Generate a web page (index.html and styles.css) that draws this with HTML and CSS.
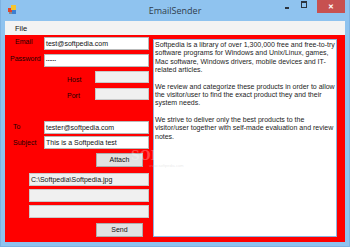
FILE: index.html
```html
<!DOCTYPE html>
<html>
<head>
<meta charset="utf-8">
<link rel="stylesheet" href="styles.css">
</head>
<body>
<div class="window">
  <div class="titlebar">
    <svg class="appicon" width="9" height="9" viewBox="0 0 9 9">
      <rect x="0" y="3" width="4" height="4" fill="#e0452a"/>
      <rect x="3" y="0" width="5" height="5" fill="#f4c430"/>
      <rect x="4" y="5" width="4" height="4" fill="#3c7fd1"/>
      <rect x="1" y="7" width="3" height="2" fill="#8a8a8a"/>
    </svg>
    <div class="title">EmailSender</div>
    <div class="controls">
      <div class="btn-min"><span></span></div>
      <div class="btn-max"><span></span></div>
      <div class="btn-close">&#x2715;</div>
    </div>
  </div>
  <div class="menubar"><span class="menu-item">File</span></div>
  <div class="client">
    <div class="form">
      <div class="row r-email"><span class="lbl lbl-email">Email</span><div class="tb tb-wide">test@softpedia.com</div></div>
      <div class="row r-pass"><span class="lbl lbl-pass">Password</span><div class="tb tb-wide pw">••••••</div></div>
      <div class="row r-host"><span class="lbl lbl-host">Host</span><div class="tb tb-short dis"></div></div>
      <div class="row r-port"><span class="lbl lbl-port">Port</span><div class="tb tb-short dis"></div></div>
      <div class="row r-to"><span class="lbl lbl-to">To</span><div class="tb tb-wide">tester@softpedia.com</div></div>
      <div class="row r-subj"><span class="lbl lbl-subj">Subject</span><div class="tb tb-wide">This is a Softpedia test</div></div>
      <div class="row r-attach"><div class="button">Attach</div></div>
      <div class="row r-file1"><div class="tb tb-file dis">C:\Softpedia\Softpedia.jpg</div></div>
      <div class="row r-file2"><div class="tb tb-file dis"></div></div>
      <div class="row r-file3"><div class="tb tb-file dis"></div></div>
      <div class="row r-send"><div class="button">Send</div></div>
    </div>
    <div class="rtb">
      <p>Softpedia is a library of over 1,300,000 free and free-to-try software programs for Windows and Unix/Linux, games, Mac software, Windows drivers, mobile devices and IT-related articles.</p>
      <p>We review and categorize these products in order to allow the visitor/user to find the exact product they and their system needs.</p>
      <p>We strive to deliver only the best products to the visitor/user together with self-made evaluation and review notes.</p>
    </div>
    <div class="watermark">SOFTPEDIA<span class="wm-small">www.softpedia.com</span></div>
  </div>
</div>
</body>
</html>
```
FILE: styles.css
```css
html, body {
  margin: 0;
  padding: 0;
}
body {
  width: 350px;
  height: 247px;
  overflow: hidden;
  font-family: "Liberation Sans", Arial, sans-serif;
}
.window {
  width: 350px;
  height: 247px;
  box-sizing: border-box;
  background: #8fc3ef;
  border: 1px solid #7db2e2;
  border-top: none;
  padding: 0 4px 4px 4px;
  display: flex;
  flex-direction: column;
}
.titlebar {
  height: 21px;
  display: flex;
  align-items: flex-start;
  position: relative;
  margin: 0 -4px;
}
.appicon {
  margin: 5px 0 0 7px;
}
.title {
  position: absolute;
  left: 0;
  right: 0;
  top: 4px;
  text-align: center;
  font-family: "Open Sans", "Liberation Sans", sans-serif;
  font-size: 9px;
  color: #2f3d4c;
  pointer-events: none;
}
.controls {
  margin-left: auto;
  display: flex;
  align-items: flex-start;
  margin-right: 4px;
}
.btn-min, .btn-max {
  width: 16px;
  height: 13px;
  display: flex;
  align-items: center;
  justify-content: center;
}
.btn-min span {
  width: 4px;
  height: 2px;
  background: #2b3440;
  margin-top: 3px;
}
.btn-max {
  margin-left: 1px;
  margin-right: 5px;
}
.btn-max span {
  width: 4px;
  height: 4px;
  border: 1px solid #2b3440;
  border-top-width: 2px;
  margin-top: -4px;
}
.btn-close {
  width: 28px;
  height: 13px;
  background: #c75150;
  color: #fff;
  font-size: 7px;
  font-weight: bold;
  display: flex;
  align-items: center;
  justify-content: center;
  line-height: 1;
}
.menubar {
  height: 14px;
  background: #f3f3f3;
  display: flex;
  align-items: center;
}
.menu-item {
  font-size: 7.5px;
  color: #111;
  margin-left: 10px;
}
.client {
  flex: 1;
  background: #ff0000;
  display: flex;
  position: relative;
  min-height: 0;
}
.form {
  width: 144px;
  display: flex;
  flex-direction: column;
}
.row {
  height: 13px;
  display: flex;
  align-items: flex-start;
}
.r-email { margin-top: 2px; }
.r-pass { margin-top: 4px; }
.r-host { margin-top: 4px; height: 12px; }
.r-port { margin-top: 5px; height: 12px; }
.r-to { margin-top: 21px; }
.r-subj { margin-top: 2px; }
.r-attach { margin-top: 4px; height: 14px; }
.r-file1 { margin-top: 6px; }
.r-file2 { margin-top: 3px; }
.r-file3 { margin-top: 3px; }
.r-send { margin-top: 5px; height: 14px; }
.lbl {
  font-size: 7px;
  line-height: 13px;
  color: #1a0000;
  white-space: nowrap;
}
.lbl-email { margin-left: 10px; margin-top: -2px; }
.lbl-pass { margin-left: 5px; margin-top: -2px; }
.lbl-host { margin-left: 62px; margin-top: 2px; }
.lbl-port { margin-left: 62px; margin-top: 1px; }
.lbl-to { margin-left: 8px; margin-top: -1px; }
.lbl-subj { margin-left: 8px; }
.tb {
  margin-left: auto;
  height: 100%;
  box-sizing: border-box;
  background: #fff;
  border: 1px solid #b9b9b9;
  font-size: 7px;
  line-height: 11px;
  padding-left: 1px;
  color: #111;
  white-space: nowrap;
  overflow: hidden;
}
.tb-wide { width: 105px; }
.tb-short { width: 54px; }
.tb-file { width: 120px; }
.tb.dis {
  background: #f0f0f0;
  border-color: #c9c9c9;
}
.pw {
  font-size: 4px;
  letter-spacing: 0.3px;
  line-height: 11px;
}
.button {
  margin-left: 91px;
  width: 47px;
  height: 14px;
  box-sizing: border-box;
  background: #e1e1e1;
  border: 1px solid #adadad;
  font-size: 7px;
  line-height: 12px;
  text-align: center;
  color: #111;
}
.rtb {
  margin: 4px 8px 5px 4px;
  flex: 1;
  background: #fff;
  border: 1px solid #8db5e0;
  padding: 1px 1px;
  font-size: 7px;
  line-height: 8.35px;
  color: #1c1c1c;
  overflow: hidden;
}
.rtb p {
  margin: 0 0 8.35px 0;
}
.watermark {
  position: absolute;
  left: 126px;
  top: 115px;
  font-family: "DejaVu Serif", serif;
  font-size: 12px;
  font-weight: bold;
  letter-spacing: 0.3px;
  color: rgba(255, 255, 255, 0.3);
  line-height: 13px;
  pointer-events: none;
}
.wm-small {
  display: block;
  font-family: "Liberation Sans", sans-serif;
  font-size: 4px;
  font-weight: normal;
  letter-spacing: 0;
  line-height: 5px;
  margin-left: 18px;
  color: rgba(200, 200, 200, 0.4);
}
```
